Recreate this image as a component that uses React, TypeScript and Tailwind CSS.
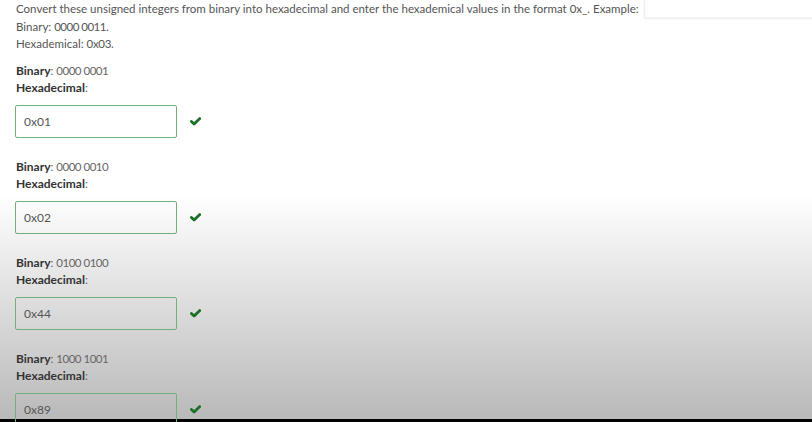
import React from "react";

const items = [
  { bin: "0000 0001", hex: "0x01" },
  { bin: "0000 0010", hex: "0x02" },
  { bin: "0100 0100", hex: "0x44" },
  { bin: "1000 1001", hex: "0x89" },
];

function Check() {
  return (
    <svg width="11" height="9" viewBox="0 0 11 9" className="ml-[13px] shrink-0">
      <path d="M1.4 4.4 L4.1 7.1 L9.8 1.6" fill="none" stroke="#1b6f27" strokeWidth="2.8" strokeLinecap="round" strokeLinejoin="round" />
    </svg>
  );
}

export default function App() {
  return (
    <div
      className="relative w-[812px] h-[422px] overflow-hidden bg-[linear-gradient(to_bottom,#ffffff_0px,#ffffff_195px,#b9b9b9_419px,#000000_419px,#000000_422px)] text-[11.5px] leading-[17px] text-[#555]"
      style={{ fontFamily: "Lato, 'Open Sans', sans-serif" }}
    >
      <div className="pl-4 flex flex-col">
        <div className="flex items-start">
          <span className="whitespace-nowrap">
            Convert these unsigned integers from binary into hexadecimal and enter the hexademical values in the format 0x_. Example:
          </span>
          <div className="ml-[5px] w-[180px] h-[18px] bg-white shrink-0 shadow-[0_1px_2px_rgba(0,0,0,0.08)] border border-[#f0f0f0] border-t-0" />
        </div>
        <div>
          Binary: <span className="tracking-[-0.5px]">0000 0011.</span>
        </div>
        <div>
          Hexademical: <span className="tracking-[-0.3px]">0x03.</span>
        </div>
        <div className="mt-[10px] flex flex-col">
          {items.map((it) => (
            <div key={it.hex} className="flex flex-col pb-[20px]">
              <div className="text-[#666]">
                <span className="font-bold text-[#333] text-[12px]">Binary</span>:{" "}
                <span className="tracking-[-0.5px]">{it.bin}</span>
              </div>
              <div className="text-[#666]">
                <span className="font-bold text-[#333] text-[12px]">Hexadecimal</span>:
              </div>
              <div className="mt-[9px] flex items-center">
                <div className="w-[162px] h-[33px] -ml-px border border-[#72b07a] rounded-[2px] flex items-center pl-[8px] text-[#555] text-[12px]">
                  {it.hex}
                </div>
                <Check />
              </div>
            </div>
          ))}
        </div>
      </div>
    </div>
  );
}
